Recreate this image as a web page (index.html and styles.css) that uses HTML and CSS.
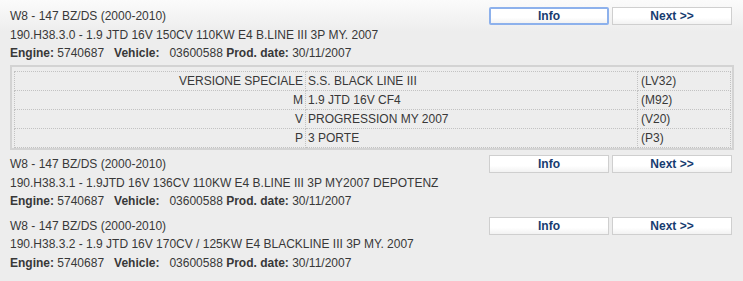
FILE: index.html
```html
<!DOCTYPE html>
<html>
<head>
<meta charset="utf-8">
<link rel="stylesheet" href="styles.css">
</head>
<body>
<div class="list">
  <div class="block">
    <div class="head">
      <span class="title">W8 - 147 BZ/DS (2000-2010)</span>
      <div class="btns">
        <button class="btn focus">Info</button>
        <button class="btn">Next &gt;&gt;</button>
      </div>
    </div>
    <div class="line">190.H38.3.0 - 1.9 JTD 16V 150CV 110KW E4 B.LINE III 3P MY. 2007</div>
    <div class="line"><b>Engine:</b> 5740687&nbsp;&nbsp; <b>Vehicle:</b>&nbsp;&nbsp; 03600588 <b>Prod. date:</b> 30/11/2007</div>
  </div>
  <div class="tablewrap">
    <table class="opts">
      <tr><td class="c1">VERSIONE SPECIALE</td><td class="c2">S.S. BLACK LINE III</td><td class="c3">(LV32)</td></tr>
      <tr><td class="c1">M</td><td class="c2">1.9 JTD 16V CF4</td><td class="c3">(M92)</td></tr>
      <tr><td class="c1">V</td><td class="c2">PROGRESSION MY 2007</td><td class="c3">(V20)</td></tr>
      <tr><td class="c1">P</td><td class="c2">3 PORTE</td><td class="c3">(P3)</td></tr>
    </table>
  </div>
  <div class="block">
    <div class="head">
      <span class="title">W8 - 147 BZ/DS (2000-2010)</span>
      <div class="btns">
        <button class="btn">Info</button>
        <button class="btn">Next &gt;&gt;</button>
      </div>
    </div>
    <div class="line">190.H38.3.1 - 1.9JTD 16V 136CV 110KW E4 B.LINE III 3P MY2007 DEPOTENZ</div>
    <div class="line"><b>Engine:</b> 5740687&nbsp;&nbsp; <b>Vehicle:</b>&nbsp;&nbsp; 03600588 <b>Prod. date:</b> 30/11/2007</div>
  </div>
  <div class="block">
    <div class="head">
      <span class="title">W8 - 147 BZ/DS (2000-2010)</span>
      <div class="btns">
        <button class="btn">Info</button>
        <button class="btn">Next &gt;&gt;</button>
      </div>
    </div>
    <div class="line">190.H38.3.2 - 1.9 JTD 16V 170CV / 125KW E4 BLACKLINE III 3P MY. 2007</div>
    <div class="line"><b>Engine:</b> 5740687&nbsp;&nbsp; <b>Vehicle:</b>&nbsp;&nbsp; 03600588 <b>Prod. date:</b> 30/11/2007</div>
  </div>
</div>
</body>
</html>
```
FILE: styles.css
```css
html {
  background: #ededed linear-gradient(to bottom, #fbfbfb 0, #ededed 32px) no-repeat;
  min-height: 100%;
}
body {
  margin: 0;
  padding: 7px 9px 0 10px;
  font-family: "Liberation Sans", Arial, sans-serif;
  font-size: 12px;
  color: #383838;
}
.block {
  line-height: 18.5px;
  margin-bottom: 6px;
}
.block:first-child {
  margin-bottom: 2.5px;
}
.head {
  display: flex;
  justify-content: space-between;
  align-items: center;
  height: 18.5px;
}
.btns {
  display: flex;
  gap: 3px;
  margin-right: 2px;
}
.btn {
  box-sizing: border-box;
  width: 120px;
  height: 18px;
  padding: 0;
  border: 1px solid #cfcfcf;
  border-radius: 0;
  background: linear-gradient(to bottom, #ffffff 0, #ffffff 60%, #f2f2f2 100%);
  font-family: "Liberation Sans", Arial, sans-serif;
  font-size: 12px;
  font-weight: bold;
  color: #173c70;
  line-height: 16px;
}
.btn.focus {
  border: 2px solid #8db1ec;
  border-radius: 2px;
  line-height: 14px;
}
.line b {
  font-weight: bold;
}
.tablewrap {
  border: 2px solid #d3d3d3;
  padding: 4px 1px 0 2px;
  margin-bottom: 5px;
}
.opts {
  width: 100%;
  border-collapse: collapse;
  table-layout: fixed;
  font-size: 12px;
  color: #383838;
}
.opts td {
  border: 1px dotted #c2c2c2;
  height: 18px;
  padding: 0 2px;
  line-height: 18px;
  white-space: nowrap;
}
.opts .c1 {
  width: 286px;
  text-align: right;
}
.opts .c2 {
  width: 327px;
}
.opts .c3 {
  padding-left: 3px;
}
```
